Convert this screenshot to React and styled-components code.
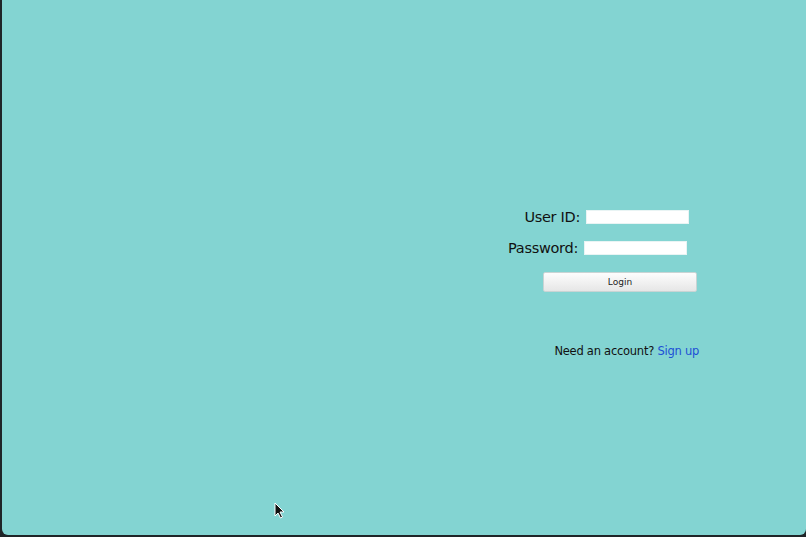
import React from 'react';
import styled, { createGlobalStyle } from 'styled-components';

const GlobalStyle = createGlobalStyle`
  html, body {
    margin: 0;
    padding: 0;
    height: 100%;
    background: #1f2528;
  }
  #root {
    height: 100%;
  }
`;

const Desktop = styled.div`
  height: 100vh;
  box-sizing: border-box;
  padding: 0 0 2px 2px;
  position: relative;
  overflow: hidden;
`;

const Window = styled.div`
  height: 100%;
  background: #83d4d2;
  border-radius: 0 0 6px 6px;
  display: flex;
  flex-direction: column;
  align-items: flex-end;
  padding-top: 207px;
  box-sizing: border-box;
  font-family: 'DejaVu Sans', 'Liberation Sans', sans-serif;
  color: #111;
`;

const Row = styled.div`
  display: flex;
  align-items: center;
  gap: 6px;
  margin-right: ${(p) => p.right}px;
  margin-bottom: ${(p) => p.below}px;
`;

const Label = styled.label`
  font-size: 14.5px;
  letter-spacing: -0.3px;
  line-height: 20px;
`;

const Field = styled.input`
  width: 103px;
  height: 14px;
  box-sizing: border-box;
  border: 1px solid #e9f4f4;
  background: #fff;
  padding: 0 3px;
  margin: 0;
  outline: none;
`;

const LoginButton = styled.button`
  width: 154px;
  height: 20px;
  margin: 3px 109px 0 0;
  box-sizing: border-box;
  border: 1px solid #c9d4d4;
  border-radius: 2px;
  background: linear-gradient(#fdfdfd, #e6e6e6);
  font-family: 'DejaVu Sans', 'Liberation Sans', sans-serif;
  font-size: 9px;
  color: #222;
  padding: 0;
`;

const Footer = styled.p`
  margin: 51px 107px 0 0;
  font-size: 11.5px;
  letter-spacing: -0.25px;
  line-height: 16px;
`;

const SignUp = styled.a`
  color: #1d4fd6;
  text-decoration: none;
  cursor: pointer;
`;

const Pointer = styled.svg`
  position: absolute;
  left: 274px;
  top: 502px;
`;

export default function App() {
  return (
    <>
      <GlobalStyle />
      <Desktop>
        <Window>
          <Row right={117} below={11}>
            <Label htmlFor="uid">User ID:</Label>
            <Field id="uid" type="text" />
          </Row>
          <Row right={119} below={11}>
            <Label htmlFor="pwd">Password:</Label>
            <Field id="pwd" type="password" />
          </Row>
          <LoginButton>Login</LoginButton>
          <Footer>
            Need an account? <SignUp>Sign up</SignUp>
          </Footer>
        </Window>
        <Pointer width="11" height="17" viewBox="0 0 11 17">
          <path d="M1 1 L1 14 L4 11 L6.5 16 L8.5 15 L6 10 L10 10 Z" fill="#111" stroke="#fff" strokeWidth="1" />
        </Pointer>
      </Desktop>
    </>
  );
}
